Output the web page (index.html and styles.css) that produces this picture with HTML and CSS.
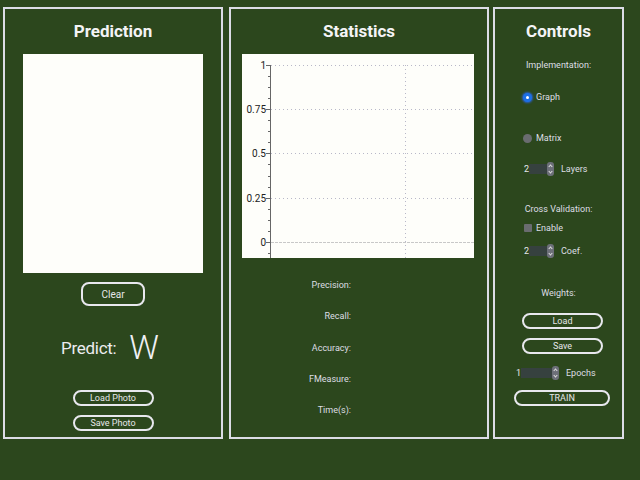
FILE: index.html
```html
<!DOCTYPE html>
<html>
<head>
<meta charset="utf-8">
<link rel="stylesheet" href="styles.css">
</head>
<body>
<div class="app">
  <section class="panel pred">
    <h2 class="title">Prediction</h2>
    <div class="canvas"></div>
    <div class="btn clear">Clear</div>
    <div class="predict"><span class="plabel">Predict:</span><span class="pval">W</span></div>
    <div class="btn pill photo load">Load Photo</div>
    <div class="btn pill photo save">Save Photo</div>
  </section>

  <section class="panel stats">
    <h2 class="title">Statistics</h2>
    <div class="chart">
      <svg width="232" height="204" viewBox="0 0 232 204">
        <rect x="0" y="0" width="232" height="204" fill="#fefefa"/>
        <g stroke="#b8b8c8" stroke-width="1" stroke-dasharray="1 3" fill="none">
          <line x1="29" y1="11.5" x2="232" y2="11.5"/>
          <line x1="29" y1="55.5" x2="232" y2="55.5"/>
          <line x1="29" y1="99.5" x2="232" y2="99.5"/>
          <line x1="29" y1="144.5" x2="232" y2="144.5"/>
          <line x1="163.5" y1="11" x2="163.5" y2="204"/>
        </g>
        <line x1="29" y1="188.5" x2="232" y2="188.5" stroke="#c8c8c8" stroke-width="1" stroke-dasharray="3 1"/>
        <line x1="28.5" y1="11" x2="28.5" y2="204" stroke="#666" stroke-width="1"/>
        <g stroke="#666" stroke-width="1">
          <line x1="24" y1="11.5" x2="28" y2="11.5"/>
          <line x1="24" y1="55.5" x2="28" y2="55.5"/>
          <line x1="24" y1="99.5" x2="28" y2="99.5"/>
          <line x1="24" y1="144.5" x2="28" y2="144.5"/>
          <line x1="24" y1="188.5" x2="28" y2="188.5"/>
          <line x1="26" y1="22.5" x2="28" y2="22.5"/>
          <line x1="26" y1="33.5" x2="28" y2="33.5"/>
          <line x1="26" y1="44.5" x2="28" y2="44.5"/>
          <line x1="26" y1="66.5" x2="28" y2="66.5"/>
          <line x1="26" y1="77.5" x2="28" y2="77.5"/>
          <line x1="26" y1="88.5" x2="28" y2="88.5"/>
          <line x1="26" y1="110.5" x2="28" y2="110.5"/>
          <line x1="26" y1="122.5" x2="28" y2="122.5"/>
          <line x1="26" y1="133.5" x2="28" y2="133.5"/>
          <line x1="26" y1="155.5" x2="28" y2="155.5"/>
          <line x1="26" y1="166.5" x2="28" y2="166.5"/>
          <line x1="26" y1="177.5" x2="28" y2="177.5"/>
          <line x1="26" y1="199.5" x2="28" y2="199.5"/>
        </g>
        <g class="ylab" text-anchor="end">
          <text x="24" y="15">1</text>
          <text x="24" y="59">0.75</text>
          <text x="24" y="103">0.5</text>
          <text x="24" y="148">0.25</text>
          <text x="24" y="192">0</text>
        </g>
      </svg>
    </div>
    <div class="metrics">
      <div class="metric">Precision:</div>
      <div class="metric">Recall:</div>
      <div class="metric">Accuracy:</div>
      <div class="metric">FMeasure:</div>
      <div class="metric">Time(s):</div>
    </div>
  </section>

  <section class="panel controls">
    <h2 class="title">Controls</h2>
    <div class="label center impl">Implementation:</div>
    <div class="row radio-row graph"><span class="radio on"></span><span class="label">Graph</span></div>
    <div class="row radio-row matrix"><span class="radio off"></span><span class="label">Matrix</span></div>
    <div class="row spin-row layers">
      <span class="spin"><span class="spin-val">2</span><span class="spin-field"></span><span class="spin-arrows"></span></span>
      <span class="label">Layers</span>
    </div>
    <div class="label center cv">Cross Validation:</div>
    <div class="row check-row"><span class="check"></span><span class="label">Enable</span></div>
    <div class="row spin-row coef">
      <span class="spin"><span class="spin-val">2</span><span class="spin-field"></span><span class="spin-arrows"></span></span>
      <span class="label">Coef.</span>
    </div>
    <div class="label center weights">Weights:</div>
    <div class="btn pill wbtn wload">Load</div>
    <div class="btn pill wbtn wsave">Save</div>
    <div class="row spin-row epochs">
      <span class="spin wide"><span class="spin-val">1</span><span class="spin-field"></span><span class="spin-arrows"></span></span>
      <span class="label">Epochs</span>
    </div>
    <div class="btn pill train">TRAIN</div>
  </section>
</div>
</body>
</html>
```

FILE: styles.css
```css
* { box-sizing: border-box; }
html, body { margin: 0; padding: 0; }
body {
  width: 640px;
  height: 480px;
  background: #2c471d;
  font-family: Roboto, "Liberation Sans", sans-serif;
  color: #e6e6ea;
  overflow: hidden;
}
.app {
  display: flex;
  align-items: flex-start;
  padding: 7px 0 0 3px;
}
.panel {
  height: 432px;
  border: 2px solid #dcdce6;
  display: flex;
  flex-direction: column;
}
.pred { width: 220px; align-items: center; }
.stats { width: 260px; margin-left: 6px; }
.controls { width: 131px; margin-left: 4px; }

.title {
  margin: 11px 0 0;
  font-size: 17px;
  line-height: 22px;
  font-weight: 700;
  color: #f4f4f6;
  text-align: center;
  align-self: stretch;
}

/* Prediction */
.canvas {
  margin-top: 12px;
  width: 180px;
  height: 219px;
  background: #fefefa;
}
.btn {
  border: 2px solid #e8e8ee;
  color: #e6e6ea;
  font-size: 9px;
  display: flex;
  align-items: center;
  justify-content: center;
}
.clear {
  margin-top: 9px;
  width: 64px;
  height: 24px;
  border-radius: 8px;
  font-size: 10px;
}
.pill { border-radius: 8px; }
.predict {
  margin-top: 27px;
  height: 30px;
  display: flex;
  align-items: center;
  margin-left: -6px;
}
.plabel { font-size: 17px; letter-spacing: -0.3px; font-weight: 400; color: #ececf0; }
.pval { font-size: 33px; font-weight: 300; margin-left: 13px; color: #f0f0f4; line-height: 30px; }
.photo { width: 81px; height: 16px; }
.load { margin-top: 27px; }
.save { margin-top: 9px; }

/* Statistics */
.chart {
  margin: 12px 0 0 11px;
  width: 232px;
  height: 204px;
}
.chart svg { display: block; }
.ylab text { font-size: 10px; fill: #222; font-family: Roboto, "Liberation Sans", sans-serif; }
.metrics {
  margin-top: 12px;
  width: 120px;
  display: flex;
  flex-direction: column;
}
.metric {
  height: 31.25px;
  line-height: 31.25px;
  text-align: right;
  font-size: 9px;
  color: #dedee4;
}

/* Controls */
.label { font-size: 9px; color: #dedee4; }
.center { text-align: center; }
.impl { margin-top: 17px; line-height: 12px; }
.row { display: flex; align-items: center; padding-left: 28px; height: 14px; }
.radio-row.graph { margin-top: 19px; }
.radio-row.matrix { margin-top: 27px; }
.radio {
  width: 9px; height: 9px; border-radius: 50%;
  margin-right: 4px; position: relative;
}
.radio.on {
  background: #1c6fe6;
  box-shadow: 0 0 2px 1px #2a5fc0;
}
.radio.on::after {
  content: ""; position: absolute; left: 3px; top: 3px;
  width: 3px; height: 3px; border-radius: 50%; background: #fff;
}
.radio.off { background: #6a6c70; }
.spin-row { padding-left: 29px; }
.spin { display: flex; align-items: center; width: 30px; height: 14px; position: relative; margin-right: 7px; }
.spin.wide { width: 43px; margin-left: -8px; }
.spin-val { font-size: 9px; color: #e6e6ea; width: 5px; }
.spin-field { flex: 1; height: 10px; background: #3a3f4e; opacity: .7; }
.spin-arrows {
  width: 7px; height: 14px; border-radius: 3px;
  background: #6c6f78;
  position: relative;
}
.spin-arrows::before, .spin-arrows::after {
  content: ""; position: absolute; left: 2px;
  width: 2px; height: 2px;
  border-left: 1px solid #ddd; border-top: 1px solid #ddd;
}
.spin-arrows::before { top: 3px; transform: rotate(45deg); }
.spin-arrows::after { bottom: 3px; transform: rotate(225deg); }
.layers { margin-top: 17px; }
.cv { margin-top: 27px; line-height: 12px; }
.check-row { margin-top: 6px; padding-left: 29px; }
.check { width: 8px; height: 8px; background: #6a6c70; border-radius: 1px; margin-right: 4px; }
.coef { margin-top: 9px; }
.weights { margin-top: 29px; line-height: 12px; }
.wbtn { width: 81px; height: 16px; margin-left: 27px; }
.wload { margin-top: 14px; }
.wsave { margin-top: 9px; }
.epochs { margin-top: 12px; }
.train { width: 96px; height: 16px; margin-left: 19px; margin-top: 10px; }
```
